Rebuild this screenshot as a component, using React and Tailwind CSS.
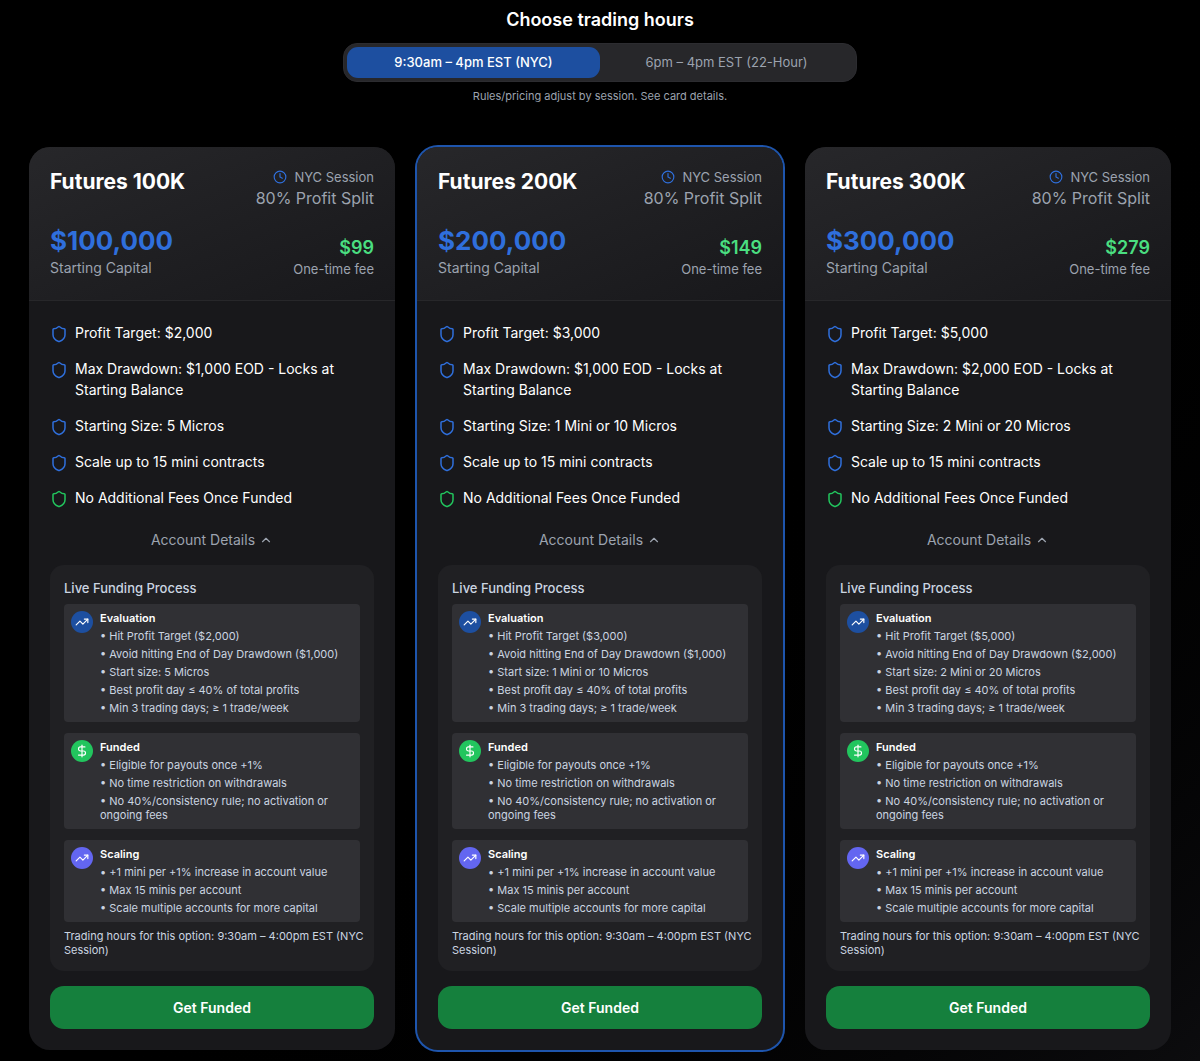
import React, { useState } from "react";
import { Clock, Shield, ChevronUp, ChevronDown, TrendingUp, DollarSign } from "lucide-react";

const sessions = [
  { id: "nyc", label: "9:30am – 4pm EST (NYC)", name: "NYC Session", hours: "9:30am – 4:00pm EST (NYC Session)" },
  { id: "full", label: "6pm – 4pm EST (22-Hour)", name: "22-Hour Session", hours: "6:00pm – 4:00pm EST (22-Hour Session)" },
];

const plans = [
  { name: "Futures 100K", capital: "$100,000", fee: "$99", target: "$2,000", drawdown: "$1,000", size: "5 Micros" },
  { name: "Futures 200K", capital: "$200,000", fee: "$149", target: "$3,000", drawdown: "$1,000", size: "1 Mini or 10 Micros", featured: true },
  { name: "Futures 300K", capital: "$300,000", fee: "$279", target: "$5,000", drawdown: "$2,000", size: "2 Mini or 20 Micros" },
];

function Feature({ text, color = "text-[#2f6fdc]" }) {
  return (
    <li className="flex items-start gap-[7px]">
      <Shield className={`w-[18px] h-[18px] mt-[3px] shrink-0 ${color}`} />
      <span>{text}</span>
    </li>
  );
}

function Step({ title, icon: Icon, color, items }) {
  return (
    <div className="flex items-start gap-[7px] rounded-sm bg-[#303034] p-[7px]">
      <div className={`w-[22px] h-[22px] shrink-0 rounded-full flex items-center justify-center text-white ${color}`}>
        <Icon className="w-[14px] h-[14px]" />
      </div>
      <div className="text-[11px] leading-[14px]">
        <h4 className="font-semibold text-white">{title}</h4>
        <ul className="mt-1 space-y-1 text-[#cbd5e1]">
          {items.map((item) => (
            <li key={item}>{`• ${item}`}</li>
          ))}
        </ul>
      </div>
    </div>
  );
}

function PlanCard({ plan, session }) {
  const [open, setOpen] = useState(true);
  const Chevron = open ? ChevronUp : ChevronDown;

  return (
    <article className={`rounded-[21px] bg-[#18181b] overflow-hidden ${plan.featured ? "ring-2 ring-[#1e55ad]" : ""}`}>
      <header className="px-[21px] pt-[21px] pb-[22px] bg-gradient-to-br from-[#27272a] to-[#18181b] border-b border-[#27272a]">
        <div className="flex justify-between items-start mb-[14px]">
          <h3 className="text-[21px] leading-7 font-bold text-white">{plan.name}</h3>
          <div className="text-right text-[#9ca3af]">
            <div className="flex items-center justify-end gap-[7px] text-[13px] leading-[18px]">
              <Clock className="w-[14px] h-[14px] text-[#2f6fdc]" />
              <span>{session.name}</span>
            </div>
            <div className="text-base leading-[25px]">80% Profit Split</div>
          </div>
        </div>
        <div className="flex justify-between items-end">
          <div>
            <div className="text-[26px] leading-8 font-bold text-[#2f6fdc]">{plan.capital}</div>
            <div className="text-sm leading-[21px] text-[#9ca3af]">Starting Capital</div>
          </div>
          <div className="text-right">
            <div className="text-lg leading-[25px] font-semibold text-[#4ade80]">{plan.fee}</div>
            <div className="text-[13px] leading-[18px] text-[#9ca3af]">One-time fee</div>
          </div>
        </div>
      </header>

      <div className="p-[21px]">
        <ul className="space-y-[15px] text-sm leading-[21px] text-white">
          <Feature text={`Profit Target: ${plan.target}`} />
          <Feature text={`Max Drawdown: ${plan.drawdown} EOD - Locks at Starting Balance`} />
          <Feature text={`Starting Size: ${plan.size}`} />
          <Feature text="Scale up to 15 mini contracts" />
          <Feature text="No Additional Fees Once Funded" color="text-[#22c55e]" />
        </ul>

        <button
          type="button"
          aria-expanded={open}
          onClick={() => setOpen(!open)}
          className="w-full mt-[21px] flex items-center justify-center gap-1 text-sm leading-[21px] text-[#9ca3af] hover:text-white"
        >
          Account Details
          <Chevron className="w-[14px] h-[14px]" />
        </button>

        {open && (
          <div className="mt-[15px] rounded-[14px] bg-[#202023] p-[14px]">
            <h4 className="mb-[7px] text-[13px] leading-[18px] font-medium text-[#cbd5e1]">Live Funding Process</h4>
            <div className="space-y-[11px]">
              <Step
                title="Evaluation"
                icon={TrendingUp}
                color="bg-[#1d4fa0]"
                items={[
                  `Hit Profit Target (${plan.target})`,
                  `Avoid hitting End of Day Drawdown (${plan.drawdown})`,
                  `Start size: ${plan.size}`,
                  "Best profit day ≤ 40% of total profits",
                  "Min 3 trading days; ≥ 1 trade/week",
                ]}
              />
              <Step
                title="Funded"
                icon={DollarSign}
                color="bg-[#22c55e]"
                items={[
                  "Eligible for payouts once +1%",
                  "No time restriction on withdrawals",
                  "No 40%/consistency rule; no activation or ongoing fees",
                ]}
              />
              <Step
                title="Scaling"
                icon={TrendingUp}
                color="bg-[#6366f1]"
                items={[
                  "+1 mini per +1% increase in account value",
                  "Max 15 minis per account",
                  "Scale multiple accounts for more capital",
                ]}
              />
            </div>
            <p className="mt-[7px] -mr-[7px] text-[11px] leading-[14px] text-[#cbd5e1]">{`Trading hours for this option: ${session.hours}`}</p>
          </div>
        )}

        <button type="button" className="w-full mt-[15px] h-[43px] rounded-[14px] bg-[#15803d] hover:bg-[#16a34a] text-sm font-semibold text-white">
          Get Funded
        </button>
      </div>
    </article>
  );
}

export default function App() {
  const [active, setActive] = useState("nyc");
  const session = sessions.find((s) => s.id === active);

  return (
    <main className="min-h-screen bg-gradient-to-br from-black from-50% to-[#0c0c0e] px-[29px] pt-[7px] pb-[11px] font-['Inter',sans-serif]">
      <section className="flex flex-col items-center text-center">
        <h2 className="text-lg leading-[25px] font-semibold text-white">Choose trading hours</h2>
        <div className="mt-[11px] w-full max-w-[514px] grid grid-cols-2 rounded-[14px] border border-[#2c2c30] bg-[#27272a] p-[3px]">
          {sessions.map((s) => (
            <button
              key={s.id}
              type="button"
              aria-pressed={active === s.id}
              onClick={() => setActive(s.id)}
              className={`h-[31px] rounded-[11px] text-[13px] ${active === s.id ? "bg-[#1d4fa0] font-medium text-white" : "text-[#9ca3af] hover:text-white"}`}
            >
              {s.label}
            </button>
          ))}
        </div>
        <p className="mt-[7px] text-[11px] leading-[14px] text-[#9ca3af]">Rules/pricing adjust by session. See card details.</p>
      </section>

      <section className="mt-[44px] mx-auto max-w-[1142px] grid grid-cols-3 gap-[22px] items-start">
        {plans.map((plan) => (
          <PlanCard key={plan.name} plan={plan} session={session} />
        ))}
      </section>
    </main>
  );
}
